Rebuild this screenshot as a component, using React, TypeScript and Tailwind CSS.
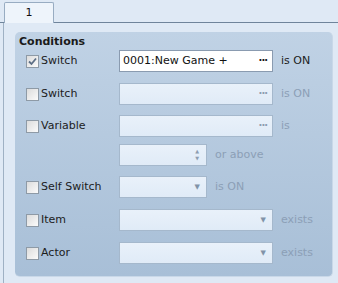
import type { ReactNode } from "react";

const font = { fontFamily: '"DejaVu Sans", Verdana, sans-serif' };

function CheckBox({ checked }: { checked?: boolean }) {
  return (
    <span className="flex h-[13px] w-[13px] shrink-0 items-center justify-center border border-[#8e9aa6] bg-gradient-to-br from-[#dcdcdc] to-[#fbfbfb]">
      {checked && (
        <svg width="9" height="9" viewBox="0 0 9 9">
          <path d="M1 4.5 L3.5 7 L8 1.5" stroke="#5d6f86" strokeWidth="1.8" fill="none" />
        </svg>
      )}
    </span>
  );
}

function Field({
  wide,
  enabled,
  value,
  kind,
}: {
  wide?: boolean;
  enabled?: boolean;
  value?: string;
  kind: "dots" | "spin" | "drop";
}) {
  const icon = enabled ? "text-[#1a1a1a]" : "text-[#8d9db0]";
  return (
    <div
      className={`flex h-[22px] items-center border pl-[3px] pr-[5px] ${wide ? "w-[154px]" : "w-[88px]"} ${
        enabled ? "border-[#8a9bb0] bg-white" : "border-[#a5b8cc] bg-gradient-to-b from-[#e9f1fa] to-[#e0ebf7]"
      }`}
    >
      <span className="flex-1 text-[11px] text-[#111]">{value}</span>
      {kind === "dots" && <span className={`text-[10px] font-bold leading-none tracking-[-1px] ${icon}`}>···</span>}
      {kind === "spin" && (
        <span className="mr-[2px] flex flex-col text-[5px] leading-[7px] text-[#8d9db0]">
          <span>▲</span>
          <span>▼</span>
        </span>
      )}
      {kind === "drop" && <span className="mr-[1px] text-[7px] text-[#8193a8]">▼</span>}
    </div>
  );
}

function Row({
  children,
  check,
  label,
  className = "",
}: {
  children: ReactNode;
  check?: "on" | "off";
  label?: string;
  className?: string;
}) {
  return (
    <div className={`flex h-[22px] items-center ${className}`}>
      <div className="flex w-[93px] items-center gap-[2px]">
        {check && <CheckBox checked={check === "on"} />}
        {label && <span className="text-[11px] text-[#1c1c1c]">{label}</span>}
      </div>
      {children}
    </div>
  );
}

function Suffix({ text, dim }: { text: string; dim?: boolean }) {
  return <span className={`ml-[8px] text-[11px] ${dim ? "text-[#8c9fb6]" : "text-[#1c1c1c]"}`}>{text}</span>;
}

export default function App() {
  return (
    <div className="h-[283px] w-[338px] overflow-hidden bg-[#dfe9f5]" style={font}>
      <div className="flex h-[23px] items-end">
        <div className="w-[4px] self-stretch border-b border-[#6f849b]" />
        <div className="flex h-[21px] w-[50px] items-center justify-center rounded-t-[2px] border border-b-0 border-[#98acc2] bg-[#eef4fb] text-[11px] text-[#111]">
          1
        </div>
        <div className="flex-1 self-stretch border-b border-[#6f849b]" />
      </div>
      <div className="ml-[3px] h-[260px] border-l border-[#9fb1c4] pl-[11px] pt-[9px]">
        <div className="flex h-[245px] w-[318px] flex-col rounded-[5px] border-r border-b border-[#c9d8e8] bg-gradient-to-b from-[#c0d2e5] to-[#a8bfd7] pl-[11px] pt-[2px]">
          <div className="-ml-[7px] h-[16px] text-[11px] font-bold leading-[16px] text-[#1a1a1a]">Conditions</div>
          <Row check="on" label="Switch">
            <Field wide enabled value="0001:New Game +" kind="dots" />
            <Suffix text="is ON" />
          </Row>
          <Row check="off" label="Switch" className="mt-[11px]">
            <Field wide kind="dots" />
            <Suffix text="is ON" dim />
          </Row>
          <Row check="off" label="Variable" className="mt-[10px]">
            <Field wide kind="dots" />
            <Suffix text="is" dim />
          </Row>
          <Row className="mt-[7px]">
            <Field kind="spin" />
            <Suffix text="or above" dim />
          </Row>
          <Row check="off" label="Self Switch" className="mt-[10px]">
            <Field kind="drop" />
            <Suffix text="is ON" dim />
          </Row>
          <Row check="off" label="Item" className="mt-[11px]">
            <Field wide kind="drop" />
            <Suffix text="exists" dim />
          </Row>
          <Row check="off" label="Actor" className="mt-[11px]">
            <Field wide kind="drop" />
            <Suffix text="exists" dim />
          </Row>
        </div>
      </div>
    </div>
  );
}
